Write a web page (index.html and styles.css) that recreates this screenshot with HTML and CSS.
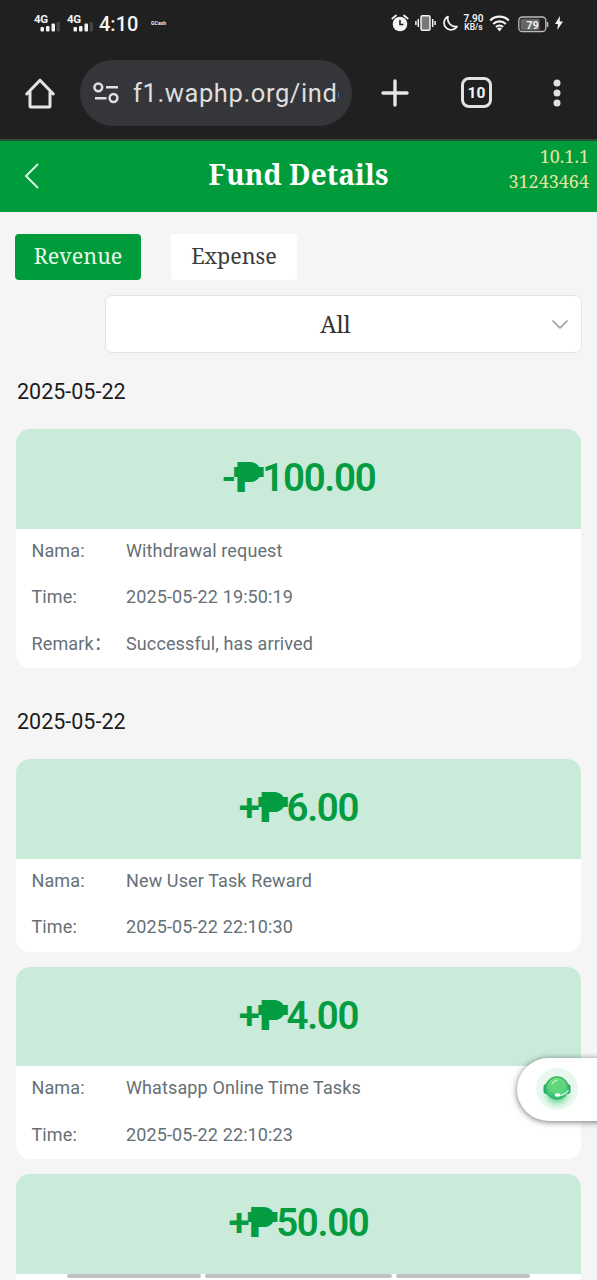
FILE: index.html
```html
<!DOCTYPE html>
<html lang="en">
<head>
<meta charset="utf-8">
<title>Fund Details</title>
<link rel="stylesheet" href="styles.css">
</head>
<body>
<div class="screen">
  <header class="chrome">
    <div class="status">
      <div class="status-left">
        <svg class="signal" width="27" height="20" viewBox="0 0 27 20"><text x="0" y="11" class="net">4G</text><g fill="#f4f4f4"><rect x="6.500" y="15" width="3.500" height="4.500" rx="1"/><rect x="12" y="14" width="3.500" height="5.500" rx="1"/><rect x="17.500" y="11.500" width="3.500" height="8" rx="1"/></g><rect x="22.500" y="10" width="3.500" height="9.500" rx="1" fill="#444"/></svg>
        <svg class="signal second" width="27" height="20" viewBox="0 0 27 20"><text x="0" y="11" class="net">4G</text><g fill="#f4f4f4"><rect x="6.500" y="15" width="3.500" height="4.500" rx="1"/><rect x="12" y="14" width="3.500" height="5.500" rx="1"/><rect x="17.500" y="11.500" width="3.500" height="8" rx="1"/></g><rect x="22.500" y="10" width="3.500" height="9.500" rx="1" fill="#444"/></svg>
        <span class="clock">4:10</span>
        <span class="carrier">GCash</span>
      </div>
      <div class="status-right">
        <svg width="18" height="18" viewBox="0 0 18 18"><circle cx="9" cy="10" r="7.300" fill="#f4f4f4"/><path d="M1.300 4.500 5 1.500M16.700 4.500 13 1.500" stroke="#f4f4f4" stroke-width="1.800" stroke-linecap="round"/><path d="M9 6v4.500h3.500" fill="none" stroke="#202020" stroke-width="1.600"/></svg>
        <svg width="21" height="18" viewBox="0 0 21 18"><rect x="6" y="1.700" width="9" height="14.600" rx="1.500" fill="#777" stroke="#f4f4f4" stroke-width="1.500"/><path d="M3.300 5v8M.9 7v4M17.700 5v8M20.100 7v4" stroke="#f4f4f4" stroke-width="1.500"/></svg>
        <svg width="16" height="17" viewBox="0 0 16 17"><path d="M6 1.500a7 7 0 1 0 9 10A8 8 0 0 1 6 1.500Z" fill="none" stroke="#f4f4f4" stroke-width="1.700" stroke-linejoin="round"/></svg>
        <span class="speed"><b>7.90</b><b>KB/s</b></span>
        <svg class="wifi" width="21" height="17" viewBox="0 0 21 17"><g fill="none" stroke="#f4f4f4" stroke-width="2.300"><path d="M1.200 5.500a13.200 13.200 0 0 1 18.600 0"/><path d="M4.200 9a9 9 0 0 1 12.600 0"/><path d="M7 12a5 5 0 0 1 7 0"/></g><path d="M8 13.500a4 4 0 0 1 5 0L10.500 16.500Z" fill="#f4f4f4"/></svg>
        <svg class="battery" width="31" height="17" viewBox="0 0 31 17"><rect x=".8" y="1" width="27" height="14.500" rx="3.500" fill="#202020" stroke="#bbb" stroke-width="1.300"/><rect x="2.500" y="2.700" width="19" height="11.200" rx="1.500" fill="#666"/><path d="M29.500 6v5" stroke="#bbb" stroke-width="1.600"/><text x="14.500" y="12.500" text-anchor="middle" class="charge">79</text></svg>
        <svg class="bolt" width="8" height="14" viewBox="0 0 8 14"><path d="M5 0 0 8h3L2.300 14 8 5.500H4.700Z" fill="#f4f4f4"/></svg>
      </div>
    </div>
    <div class="toolbar">
      <svg class="home" width="32" height="32" viewBox="0 0 32 32"><path d="M2.700 17 16 3.200 29.300 17M6 14.500V29q0 1 1 1H25q1 0 1-1V14.500" fill="none" stroke="#e6e6e6" stroke-width="3" stroke-linejoin="round" stroke-linecap="round"/></svg>
      <div class="address">
        <svg width="27" height="22" viewBox="0 0 27 22"><g fill="none" stroke="#e0e0e0" stroke-width="2.500"><circle cx="5.300" cy="5.300" r="3.900"/><path d="M13 5.300h12M2 16.300h11.500"/><circle cx="20.500" cy="16" r="3.900"/></g></svg>
        <span class="url">f1.waphp.org/inde</span>
      </div>
      <svg class="plus" width="28" height="28" viewBox="0 0 28 28"><path d="M14 2v24M2 14h24" stroke="#e6e6e6" stroke-width="3.400" stroke-linecap="round"/></svg>
      <span class="tabs-count">10</span>
      <svg class="dots" width="8" height="28" viewBox="0 0 8 28"><g fill="#e0e0e0"><circle cx="4" cy="4" r="3.500"/><circle cx="4" cy="14" r="3.500"/><circle cx="4" cy="24" r="3.500"/></g></svg>
    </div>
  </header>

  <nav class="titlebar">
    <svg class="back" width="16" height="28" viewBox="0 0 16 28"><path d="M14 2 2 14 14 26" fill="none" stroke="#d9f5df" stroke-width="2"/></svg>
    <h1 class="title">Fund Details</h1>
    <div class="ids"><span>10.1.1</span><span>31243464</span></div>
  </nav>

  <main class="content">
    <div class="filters">
      <span class="filter active">Revenue</span>
      <span class="filter">Expense</span>
    </div>
    <div class="select"><span>All</span>
      <svg class="chevron" width="18" height="11" viewBox="0 0 18 11"><path d="M1.500 1.500 9 9 16.500 1.500" fill="none" stroke="#999" stroke-width="1.500"/></svg>
    </div>

    <h2 class="date">2025-05-22</h2>
    <section class="card">
      <div class="amount"><span>-</span><span class="peso">₱</span><span>100.00</span></div>
      <div class="row"><span class="label">Nama:</span><span>Withdrawal request</span></div>
      <div class="row"><span class="label">Time:</span><span class="num">2025-05-22 19:50:19</span></div>
      <div class="row"><span class="label">Remark<span class="wide">：</span></span><span>Successful, has arrived</span></div>
    </section>

    <h2 class="date later">2025-05-22</h2>
    <section class="card">
      <div class="amount"><span>+</span><span class="peso">₱</span><span>6.00</span></div>
      <div class="row"><span class="label">Nama:</span><span>New User Task Reward</span></div>
      <div class="row"><span class="label">Time:</span><span class="num">2025-05-22 22:10:30</span></div>
    </section>
    <section class="card">
      <div class="amount"><span>+</span><span class="peso">₱</span><span>4.00</span></div>
      <div class="row"><span class="label">Nama:</span><span>Whatsapp Online Time Tasks</span></div>
      <div class="row"><span class="label">Time:</span><span class="num">2025-05-22 22:10:23</span></div>
    </section>
    <section class="card">
      <div class="amount"><span>+</span><span class="peso">₱</span><span>50.00</span></div>
      <div class="row"></div>
    </section>
  </main>

  <div class="support">
    <svg width="44" height="44" viewBox="0 0 44 44">
      <defs>
        <radialGradient id="halo"><stop offset="0" stop-color="#4ed18e"/><stop offset=".5" stop-color="#8fe0b3"/><stop offset=".75" stop-color="#c8f1d9"/><stop offset="1" stop-color="#e9f8ee"/></radialGradient>
        <linearGradient id="face" x2="0" y2="1"><stop offset="0" stop-color="#7ddf7f"/><stop offset="1" stop-color="#2fc184"/></linearGradient>
      </defs>
      <circle cx="22" cy="22" r="21" fill="#e9f8ee"/>
      <circle cx="22" cy="26" r="16" fill="url(#halo)"/>
      <rect x="8.500" y="17" width="6" height="10" rx="3" fill="#27ad69"/><rect x="29.500" y="17" width="6" height="10" rx="3" fill="#27ad69"/>
      <circle cx="22" cy="21" r="11" fill="url(#face)" stroke="#3ab865" stroke-width="1.600"/>
      <ellipse cx="22" cy="20" rx="8" ry="7" fill="#5fd67b"/>
      <path d="M17 17q1.500-3 5-3.500" fill="none" stroke="#b4f2bb" stroke-width="1.500" stroke-linecap="round"/>
      <path d="M33.500 23q-3.500 5.500-11 5.500" fill="none" stroke="#b6edce" stroke-width="1.500"/>
      <ellipse cx="22.500" cy="28" rx="2.800" ry="1.800" fill="#fff"/>
    </svg>
  </div>
  <div class="navhint"><i></i><i class="mid"></i><i></i></div>
</div>
</body>
</html>
```
FILE: styles.css
```css
* { box-sizing: border-box; }
body { margin: 0; background: #f5f5f5; font-family: Roboto, sans-serif; }
svg { display: block; flex: none; }
.screen { position: relative; width: 597px; height: 1280px; overflow: hidden; }

.chrome { height: 141px; background: #202020; border-bottom: 2px solid #2b5038; color: #f4f4f4; }
.status { height: 46px; display: flex; justify-content: space-between; padding: 0 34px 0 34px; }
.status-left, .status-right { display: flex; align-items: center; }
.signal { margin-top: -2px; }
.signal.second { margin-left: 6px; }
.net { font: 700 11.500px Roboto, sans-serif; fill: #f4f4f4; letter-spacing: -.4px; }
.clock { margin: 2px 0 0 5px; width: 52px; font-size: 20px; font-weight: 500; white-space: nowrap; }
.carrier { font-size: 5px; font-weight: 700; letter-spacing: .1px; }
.status-right { gap: 6px; margin-right: 0; }
.speed { display: flex; flex-direction: column; width: 19px; align-items: center; font-size: 10px; line-height: 9px; }
.speed b { font-weight: 600; }
.speed b + b { font-size: 8.5px; }
.charge { font: 700 11px Roboto, sans-serif; fill: #f4f4f4; }
.wifi { margin-right: 1px; }
.battery { margin: 2px 0 0 1px; }

.toolbar { height: 93px; display: flex; align-items: center; padding: 0 36px 0 24px; }
.address { width: 272px; height: 66px; margin-left: 24px; padding: 0 13px; border-radius: 33px; background: #34363a; display: flex; align-items: center; gap: 13px; }
.url { flex: 1; overflow: hidden; white-space: nowrap; font-size: 25.5px; line-height: 40px; color: #dedede; letter-spacing: .6px; }
.plus { margin-left: 29px; }
.tabs-count { width: 31px; height: 31px; margin-left: 52px; border: 3px solid #e2e2e2; border-radius: 8px; font-size: 15.5px; font-weight: 700; line-height: 26px; text-align: center; }
.dots { margin-left: 61px; }

.titlebar { height: 71px; background: #009c3b; display: grid; grid-template-columns: 140px 1fr 140px; align-items: start; font-family: "Noto Serif", "DejaVu Serif Condensed", "DejaVu Serif", serif; }
.back { margin: 21px 0 0 24px; }
.title { margin: 13px 0 0; font-size: 28px; line-height: 40px; letter-spacing: .1px; color: #fff; text-align: center; white-space: nowrap; }
.ids { padding: 3px 8px 0 0; display: flex; flex-direction: column; align-items: flex-end; color: #e5e3a1; font-size: 18px; line-height: 25px; }

.content { padding: 22px 16px 0; }
.filters { display: flex; gap: 30px; margin-left: -1px; }
.filter { width: 126px; height: 46px; border-radius: 4px; background: #fff; color: #3c3c3c; font: 21.500px/43px "Noto Serif", "DejaVu Serif Condensed", "DejaVu Serif", serif; text-align: center; }
.filter.active { background: #009c3b; color: #e5f8e7; }
.select { margin: 15px -1px 0 89px; height: 58px; border: 1.500px solid #e4e4e4; border-radius: 7px; background: #fff; display: grid; grid-template-columns: 50px 1fr 50px; align-items: center; font: 23px/55px "Noto Serif", "DejaVu Serif Condensed", "DejaVu Serif", serif; color: #333; }
.select span { grid-column: 2; text-align: center; margin-right: 16px; }
.chevron { margin-left: 20px; }

.date { margin: 27px 0 25px; padding-left: 1px; font-size: 21.500px; font-weight: 400; line-height: 24px; color: #1c1c1c; }
.date.later { margin-top: 42px; }
.card { background: #fff; border-radius: 14px; overflow: hidden; margin-bottom: 15px; }
.amount { height: 99.500px; padding-bottom: 1px; display: flex; align-items: center; justify-content: center; background: #cbebda; color: #049c40; font-size: 38.500px; font-weight: 600; line-height: 50px; letter-spacing: -1.300px; }
.peso { margin: 0 .5px 0 0; -webkit-text-stroke: 2.200px #049c40; }
.row { height: 46.500px; display: flex; align-items: center; padding: 0 15.500px 2px; font-size: 18px; line-height: 24px; letter-spacing: .12px; color: #667077; }
.label { width: 94.500px; white-space: nowrap; }
.wide { font-family: "Noto Sans CJK SC", sans-serif; line-height: 1; }

.support { position: absolute; left: 517px; top: 1058px; width: 130px; height: 63px; padding: 9px 0 0 18px; border-radius: 32px; background: #fff; box-shadow: 0 1px 6px rgba(0,0,0,.55); }
.navhint { position: absolute; left: 67px; top: 1274px; display: flex; gap: 4px; }
.navhint i { width: 134px; height: 4px; border-radius: 2px; background: #c1c1c1; }
.navhint .mid { width: 187px; }
```
